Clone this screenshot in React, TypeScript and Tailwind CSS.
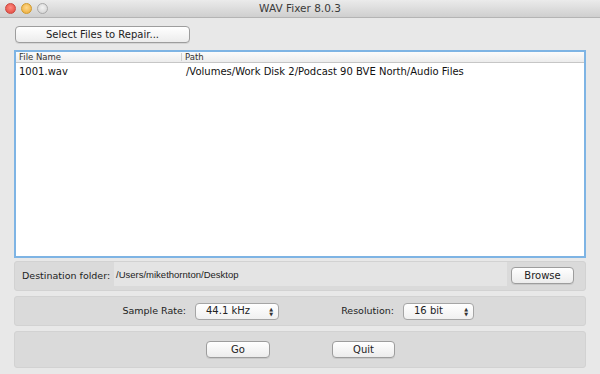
const ui = { fontFamily: '"DejaVu Sans", "Liberation Sans", sans-serif' };

function MacButton({ children, className = '' }: { children: React.ReactNode; className?: string }) {
  return (
    <div
      className={`flex h-[17px] items-center justify-center rounded-[4px] border border-[#9d9d9d] bg-gradient-to-b from-[#ffffff] to-[#ececec] text-[10px] leading-none text-[#222] shadow-[0_1px_0_rgba(0,0,0,0.08)] ${className}`}
    >
      {children}
    </div>
  );
}

function PopUp({ value, className = '' }: { value: string; className?: string }) {
  return (
    <div
      className={`flex h-[17px] items-center justify-between rounded-[4px] border border-[#a5a5a5] bg-gradient-to-b from-[#ffffff] to-[#f0f0f0] pl-[10px] pr-[5px] text-[10px] leading-none text-[#222] ${className}`}
    >
      <span>{value}</span>
      <span className="flex flex-col items-center gap-[1px] text-[5px] leading-[4px] text-[#333]">
        <span>▲</span>
        <span>▼</span>
      </span>
    </div>
  );
}

export default function App() {
  return (
    <div className="h-[374px] w-[600px] overflow-hidden bg-[#e8e8e8]" style={ui}>
      {/* Title bar */}
      <div className="relative flex h-[18px] items-center border-b border-[#b4b4b4] bg-gradient-to-b from-[#ebebeb] to-[#cfcfcf]">
        <div className="flex items-center gap-[5px] pl-[5px]">
          <span className="h-[11px] w-[11px] rounded-full border border-[#c94a42] bg-[radial-gradient(circle_at_50%_40%,#ff8b80,#e0443a)]" />
          <span className="h-[11px] w-[11px] rounded-full border border-[#d09a2c] bg-[radial-gradient(circle_at_50%_40%,#ffd88a,#eaa834)]" />
          <span className="h-[11px] w-[11px] rounded-full border border-[#a8a8a8] bg-[radial-gradient(circle_at_50%_40%,#f2f2f2,#cfcfcf)]" />
        </div>
        <div className="absolute inset-0 flex items-center justify-center text-[10.5px] text-[#3a3a3a]">
          WAV Fixer 8.0.3
        </div>
      </div>

      <div className="flex flex-col px-[14px]">
        <MacButton className="ml-[1px] mt-[8px] w-[175px]">Select Files to Repair...</MacButton>

        {/* File table */}
        <div className="mt-[7px] h-[208px] w-[572px] border-[2px] border-[#7eb4e4] bg-white">
          <div className="flex h-[11px] items-center border-b border-[#c6c6c6] bg-gradient-to-b from-[#fbfbfb] to-[#ececec] text-[8.5px] leading-none text-[#333]">
            <div className="w-[166px] border-r border-[#cfcfcf] pl-[3px]">File Name</div>
            <div className="pl-[3px]">Path</div>
          </div>
          <div className="mt-[4px] flex text-[10px] leading-none text-[#111]">
            <div className="w-[167px] pl-[3px]">1001.wav</div>
            <div className="pl-[3px]">/Volumes/Work Disk 2/Podcast 90 BVE North/Audio Files</div>
          </div>
        </div>

        {/* Destination */}
        <div className="mt-[3px] flex h-[30px] w-[572px] rounded-[3px] border border-[#d2d2d2] bg-[#dadada]">
          <div className="flex w-[99px] items-center whitespace-nowrap pl-[7px] text-[9.5px] text-[#222]">Destination folder:</div>
          <div className="mb-[4px] flex flex-1 items-center bg-[#e4e4e4] pl-[2px] pt-[3px] text-[9.5px] text-[#222]" style={{ fontFamily: '"Liberation Sans", sans-serif' }}>
            /Users/mikethornton/Desktop
          </div>
          <div className="flex w-[78px] items-start pl-[4px] pt-[5px]">
            <MacButton className="w-[63px]">Browse</MacButton>
          </div>
        </div>

        {/* Sample rate / resolution */}
        <div className="mt-[5px] flex h-[30px] w-[572px] items-center rounded-[3px] border border-[#d2d2d2] bg-[#dadada] text-[9.5px] text-[#222]">
          <div className="w-[171px] text-right">Sample Rate:</div>
          <PopUp value="44.1 kHz" className="ml-[9px] w-[84px]" />
          <div className="ml-[62px] w-[53px] text-right">Resolution:</div>
          <PopUp value="16 bit" className="ml-[9px] w-[71px]" />
        </div>

        {/* Go / Quit */}
        <div className="mt-[5px] flex h-[37px] w-[572px] items-center rounded-[3px] border border-[#d2d2d2] bg-[#dadada]">
          <MacButton className="ml-[191px] w-[64px]">Go</MacButton>
          <MacButton className="ml-[62px] w-[63px]">Quit</MacButton>
        </div>
      </div>
    </div>
  );
}
